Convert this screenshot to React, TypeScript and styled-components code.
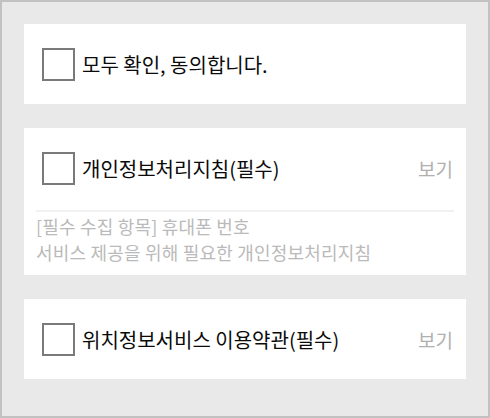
import styled, {createGlobalStyle} from 'styled-components';

const GlobalStyle = createGlobalStyle`
    html, body {
        margin: 0;
        padding: 0;
    }
    body {
        font-family: 'Noto Sans CJK KR', 'Noto Sans', sans-serif;
    }
`;

type Term = {
    id: string;
    title: string;
    details?: string[];
};

const TERMS: Term[] = [
    {
        id: 'privacy',
        title: '개인정보처리지침(필수)',
        details: ['[필수 수집 항목] 휴대폰 번호', '서비스 제공을 위해 필요한 개인정보처리지침'],
    },
    {id: 'location', title: '위치정보서비스 이용약관(필수)'},
];

const App = () => {
    return (
        <>
            <GlobalStyle />
            <Page>
                <Card>
                    <CheckRow>
                        <CheckBox type='button' aria-label='모두 동의' />
                        <Label>모두 확인, 동의합니다.</Label>
                    </CheckRow>
                </Card>
                {TERMS.map(term => (
                    <Card key={term.id}>
                        <CheckRow>
                            <CheckBox type='button' aria-label={term.title} />
                            <Label>{term.title}</Label>
                            <ViewLink>보기</ViewLink>
                        </CheckRow>
                        {term.details && (
                            <Details>
                                {term.details.map(line => (
                                    <p key={line}>{line}</p>
                                ))}
                            </Details>
                        )}
                    </Card>
                ))}
            </Page>
        </>
    );
};

export default App;

const Page = styled.main`
    width: 490px;
    height: 418px;
    box-sizing: border-box;
    background-color: #e9e9e9;
    border: 2px solid #c2c2c2;
    padding: 22px 22px;
    display: flex;
    flex-direction: column;
    gap: 24px;
`;

const Card = styled.section`
    background-color: #ffffff;
    padding: 0 12px;
`;

const CheckRow = styled.div`
    height: 80px;
    display: flex;
    align-items: center;
    padding: 0 1px 0 6px;
`;

const CheckBox = styled.button`
    width: 33px;
    height: 33px;
    flex: none;
    box-sizing: border-box;
    border: 2px solid #7a7a7a;
    background: #ffffff;
    padding: 0;
    margin-right: 7px;
    cursor: pointer;
`;

const Label = styled.span`
    flex: 1;
    font-size: 20px;
    color: #0a0a0a;
`;

const ViewLink = styled.span`
    font-size: 19px;
    color: #b0b0b0;
    cursor: pointer;
`;

const Details = styled.div`
    margin-top: 2px;
    border-top: 2px solid #f1f1f1;
    padding: 1px 0 10px;
    p {
        margin: 0;
        font-size: 18px;
        line-height: 26px;
        letter-spacing: 0.2px;
        color: #bababa;
    }
`;
